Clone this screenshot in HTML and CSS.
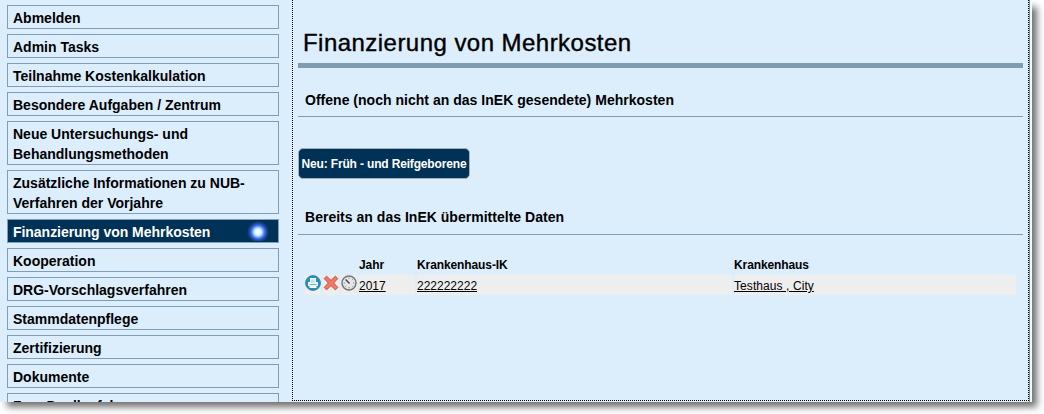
FILE: index.html
```html
<!DOCTYPE html>
<html lang="de">
<head>
<meta charset="utf-8">
<title>Finanzierung von Mehrkosten</title>
<link rel="stylesheet" href="styles.css">
</head>
<body>
<div class="window">
  <nav class="menu">
    <a class="item"><span>Abmelden</span></a>
    <a class="item"><span>Admin Tasks</span></a>
    <a class="item"><span>Teilnahme Kostenkalkulation</span></a>
    <a class="item"><span>Besondere Aufgaben / Zentrum</span></a>
    <a class="item"><span>Neue Untersuchungs- und<br>Behandlungsmethoden</span></a>
    <a class="item"><span>Zusätzliche Informationen zu NUB-<br>Verfahren der Vorjahre</span></a>
    <a class="item active"><span>Finanzierung von Mehrkosten</span><i class="glow"></i></a>
    <a class="item"><span>Kooperation</span></a>
    <a class="item"><span>DRG-Vorschlagsverfahren</span></a>
    <a class="item"><span>Stammdatenpflege</span></a>
    <a class="item"><span>Zertifizierung</span></a>
    <a class="item"><span>Dokumente</span></a>
    <a class="item"><span>Zum Duellanfal</span></a>
  </nav>
  <main class="content">
    <h1><span>Finanzierung von Mehrkosten</span></h1>
    <h2><span>Offene (noch nicht an das InEK gesendete) Mehrkosten</span></h2>
    <button class="new"><span>Neu: Früh - und Reifgeborene</span></button>
    <h2 class="sent"><span>Bereits an das InEK übermittelte Daten</span></h2>
    <div class="grid">
      <b></b><b></b><b></b><b>Jahr</b><b>Krankenhaus-IK</b><b>Krankenhaus</b>
      <div class="cell"><svg viewBox="0 0 16 16"><circle cx="8" cy="8" r="7.5" fill="#2590b8" stroke="#3a7f9f" stroke-width=".8"/><path d="M5 3h6v4h1.2q.8 0 .8.8V11h-1.5v2h-7v-2H3V7.800q0-.8.8-.8H5z" fill="#f4fbfe"/><path d="M6 4.500h4V8H6z" fill="#c3e3ef"/><path d="M4.500 9h7v1h-7z" fill="#65b3d0"/></svg></div>
      <div class="cell"><svg viewBox="0 0 16 16"><path d="M1.200 3.600 3.600 1.200 8 5.400l4.400-4.200 2.400 2.400L10.600 8l4.200 4.400-2.400 2.400L8 10.600l-4.400 4.200-2.400-2.400L5.400 8z" fill="#f07a68" stroke="#d0483c"/></svg></div>
      <div class="cell"><svg viewBox="0 0 16 16"><circle cx="8" cy="8" r="7" fill="#e6e6e6" stroke="#777" stroke-width="1.500"/><path d="M4.600 4.600 8.500 8.500" stroke="#444" stroke-width="1.400"/><path d="M8 2.500v1.300M2.700 8H4m8 0h1.300M8 12v1.300m3.700-9-.8.8M4.300 11.700l.8-.8m6.600.8-.8-.8" stroke="#888"/></svg></div>
      <div class="cell"><a>2017</a></div>
      <div class="cell"><a>222222222</a></div>
      <div class="cell"><a class="house">Testhaus , City</a></div>
    </div>
  </main>
</div>
</body>
</html>
```
FILE: styles.css
```css
* { box-sizing: border-box; }
body {
  margin: 0;
  height: 414px;
  overflow: hidden;
  background: #fff;
  color: #000;
  font-family: "Liberation Sans", Arial, sans-serif;
}
.window {
  display: flex;
  width: 1032px;
  height: 402px;
  background: linear-gradient(90deg, #dceefc 1029px, #7f8a90 1029px, #7f8a90 1030px, #e2ffff 1030px);
  box-shadow: 6px 6px 7px -1px #707070;
}
.menu {
  width: 292px;
  height: 402px;
  padding: 5px 13px 0 7px;
  overflow: hidden;
  display: flex;
  flex-direction: column;
  gap: 5px;
}
.item {
  flex: none;
  display: flex;
  align-items: center;
  justify-content: space-between;
  min-height: 24px;
  border: 1px solid #7f9db4;
  padding: 2px 8px 0 5px;
  font-size: 14px;
  font-weight: bold;
  line-height: 20px;
}
.active { background: #003156; color: #fff; letter-spacing: -.04px; }
.glow {
  width: 24px;
  height: 20px;
  margin-top: -2px;
  background: radial-gradient(circle at 12px 11px, #f0ffff 0 2px, #b5e5ff 4px, #5686ff 6px, #2750b8 8px, #003156 11px);
}
.content {
  width: 737px;
  height: 401px;
  padding: 0 5px;
  border: 1px dotted #000;
  border-top: 0;
}
h1, h2 { margin: 0; }
h1 {
  height: 68px;
  padding: 29px 0 0 5px;
  border-bottom: 5px solid #7f9db0;
  font-size: 24px;
  font-weight: normal;
  line-height: 28px;
  letter-spacing: .46px;
  -webkit-text-stroke: .4px #000;
}
h2 {
  height: 49px;
  padding: 22px 0 0 7px;
  border-bottom: 1px solid #7f9db4;
  font-size: 14px;
  line-height: 20px;
  letter-spacing: .02px;
}
.new {
  display: block;
  width: 172px;
  height: 31px;
  margin: 31px 0 0;
  padding: 0;
  border: 1px solid #a5aeb5;
  border-radius: 5px;
  background: #003156;
  color: #fff;
  font: bold 12px "Liberation Sans", Arial, sans-serif;
  letter-spacing: -.16px;
  white-space: nowrap;
}
.sent { height: 49px; margin-top: 7px; padding-top: 21px; }
.grid {
  display: grid;
  grid-template-columns: 16px 16px 16px 56px 315px 282px;
  grid-template-rows: 20px 20px;
  column-gap: 2px;
  padding: 20px 0 0 7px;
  font-size: 12px;
  line-height: 20px;
}
.grid b { letter-spacing: -.1px; }
.cell { height: 20px; background: #eee; line-height: 22px; }
.cell a { text-decoration: underline; text-underline-offset: 1px; }
.house { letter-spacing: .08px; }
.cell svg { display: block; width: 16px; height: 16px; }
```
